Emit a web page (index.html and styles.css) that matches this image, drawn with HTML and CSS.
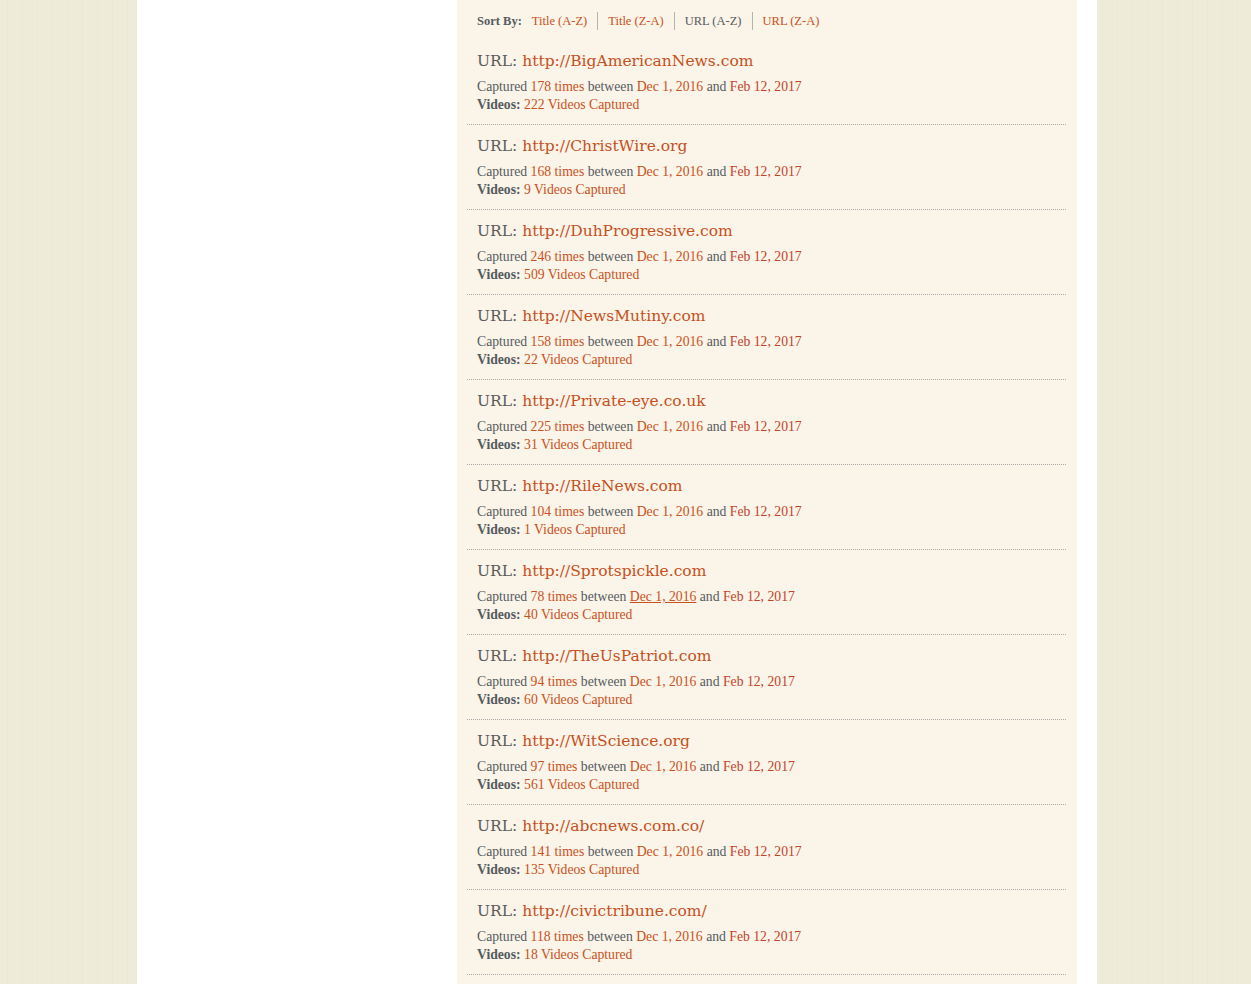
FILE: index.html
```html
<!DOCTYPE html>
<html>
<head>
<meta charset="utf-8">
<link rel="stylesheet" href="styles.css">
</head>
<body>
<div class="page">
  <aside class="sidebar"></aside>
  <main class="panel">
    <nav class="sort">
      <span class="sort-label">Sort By:</span>
      <a class="sort-link">Title (A-Z)</a>
      <a class="sort-link">Title (Z-A)</a>
      <span class="sort-link active">URL (A-Z)</span>
      <a class="sort-link">URL (Z-A)</a>
    </nav>
    <ul class="list">
      <li class="item">
        <h3 class="url">URL: <a>http://BigAmericanNews.com</a></h3>
        <p class="meta">Captured <a>178 times</a> between <a>Dec 1, 2016</a> and <a class="alt">Feb 12, 2017</a></p>
        <p class="meta"><b>Videos:</b> <a>222 Videos Captured</a></p>
      </li>
      <li class="item">
        <h3 class="url">URL: <a>http://ChristWire.org</a></h3>
        <p class="meta">Captured <a>168 times</a> between <a>Dec 1, 2016</a> and <a class="alt">Feb 12, 2017</a></p>
        <p class="meta"><b>Videos:</b> <a>9 Videos Captured</a></p>
      </li>
      <li class="item">
        <h3 class="url">URL: <a>http://DuhProgressive.com</a></h3>
        <p class="meta">Captured <a>246 times</a> between <a>Dec 1, 2016</a> and <a class="alt">Feb 12, 2017</a></p>
        <p class="meta"><b>Videos:</b> <a>509 Videos Captured</a></p>
      </li>
      <li class="item">
        <h3 class="url">URL: <a>http://NewsMutiny.com</a></h3>
        <p class="meta">Captured <a>158 times</a> between <a>Dec 1, 2016</a> and <a class="alt">Feb 12, 2017</a></p>
        <p class="meta"><b>Videos:</b> <a>22 Videos Captured</a></p>
      </li>
      <li class="item">
        <h3 class="url">URL: <a>http://Private-eye.co.uk</a></h3>
        <p class="meta">Captured <a>225 times</a> between <a>Dec 1, 2016</a> and <a class="alt">Feb 12, 2017</a></p>
        <p class="meta"><b>Videos:</b> <a>31 Videos Captured</a></p>
      </li>
      <li class="item">
        <h3 class="url">URL: <a>http://RileNews.com</a></h3>
        <p class="meta">Captured <a>104 times</a> between <a>Dec 1, 2016</a> and <a class="alt">Feb 12, 2017</a></p>
        <p class="meta"><b>Videos:</b> <a>1 Videos Captured</a></p>
      </li>
      <li class="item">
        <h3 class="url">URL: <a>http://Sprotspickle.com</a></h3>
        <p class="meta">Captured <a>78 times</a> between <a class="hover">Dec 1, 2016</a> and <a class="alt">Feb 12, 2017</a></p>
        <p class="meta"><b>Videos:</b> <a>40 Videos Captured</a></p>
      </li>
      <li class="item">
        <h3 class="url">URL: <a>http://TheUsPatriot.com</a></h3>
        <p class="meta">Captured <a>94 times</a> between <a>Dec 1, 2016</a> and <a class="alt">Feb 12, 2017</a></p>
        <p class="meta"><b>Videos:</b> <a>60 Videos Captured</a></p>
      </li>
      <li class="item">
        <h3 class="url">URL: <a>http://WitScience.org</a></h3>
        <p class="meta">Captured <a>97 times</a> between <a>Dec 1, 2016</a> and <a class="alt">Feb 12, 2017</a></p>
        <p class="meta"><b>Videos:</b> <a>561 Videos Captured</a></p>
      </li>
      <li class="item">
        <h3 class="url">URL: <a>http://abcnews.com.co/</a></h3>
        <p class="meta">Captured <a>141 times</a> between <a>Dec 1, 2016</a> and <a class="alt">Feb 12, 2017</a></p>
        <p class="meta"><b>Videos:</b> <a>135 Videos Captured</a></p>
      </li>
      <li class="item">
        <h3 class="url">URL: <a>http://civictribune.com/</a></h3>
        <p class="meta">Captured <a>118 times</a> between <a>Dec 1, 2016</a> and <a class="alt">Feb 12, 2017</a></p>
        <p class="meta"><b>Videos:</b> <a>18 Videos Captured</a></p>
      </li>
    </ul>
  </main>
</div>
</body>
</html>
```

FILE: styles.css
```css
html, body {
  margin: 0;
  padding: 0;
}
body {
  background-color: #eeebd8;
  background-image: repeating-linear-gradient(90deg, rgba(255,255,255,0) 0, rgba(255,255,255,0) 7px, rgba(225,222,198,0.25) 7px, rgba(225,222,198,0.25) 8px, rgba(255,255,255,0) 8px, rgba(255,255,255,0) 15px);
  font-family: "Liberation Serif", serif;
  color: #555b5f;
  min-height: 984px;
}
.page {
  width: 960px;
  margin-left: 137px;
  background: #ffffff;
  display: grid;
  grid-template-columns: 320px 620px 20px;
  min-height: 984px;
}
.panel {
  background: #fbf4e8;
  padding: 12px 11px 0 10px;
}
.sort {
  display: flex;
  align-items: center;
  padding-left: 10px;
  font-size: 12.5px;
  line-height: 18px;
  height: 18px;
}
.sort-label {
  font-weight: bold;
}
.sort-link {
  color: #c8511c;
  padding: 0 10px;
  border-left: 1px solid #b3b3b3;
}
.sort-label + .sort-link {
  border-left: none;
}
.sort-link.active {
  color: #555b5f;
}
.list {
  list-style: none;
  margin: 10px 0 0 0;
  padding: 0;
}
.item {
  padding: 9px 0 10px 10px;
  border-bottom: 1px dotted #a8a8a8;
}
.url {
  margin: 0 0 5px 0;
  font-family: "DejaVu Serif", serif;
  font-weight: normal;
  font-size: 15.5px;
  line-height: 24px;
  color: #5b5b5b;
}
.url a {
  color: #c5501d;
}
.meta {
  margin: 0;
  font-size: 13.7px;
  line-height: 18px;
}
.meta a {
  color: #c8511c;
}
.meta a.alt {
  color: #c2422a;
}
.meta a.hover {
  text-decoration: underline;
}
.meta b {
  font-weight: bold;
}
```
